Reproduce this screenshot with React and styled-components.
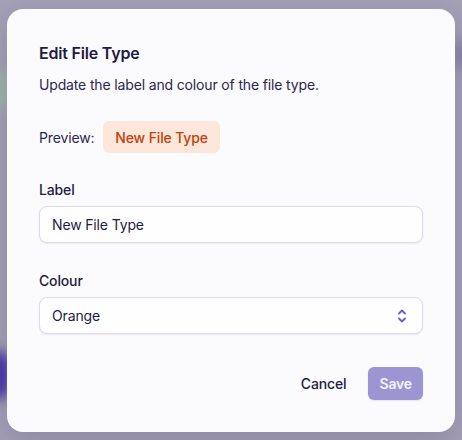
import React from "react";
import styled, { createGlobalStyle } from "styled-components";

const Global = createGlobalStyle`
  html, body { margin: 0; padding: 0; }
  body {
    font-family: Inter, "Noto Sans", sans-serif;
    background: #a4a0b7;
    -webkit-font-smoothing: antialiased;
  }
  * { box-sizing: border-box; }
`;

const Backdrop = styled.div`
  position: relative;
  width: 462px;
  height: 440px;
  overflow: hidden;
  background: #a4a0b6;
  display: flex;
  align-items: flex-start;
  justify-content: center;
  padding-top: 9px;
`;

const Blob = styled.div`
  position: absolute;
  border-radius: 50%;
  filter: blur(6px);
`;

const Dialog = styled.div`
  position: relative;
  width: 448px;
  height: 423px;
  background: #fbfafd;
  border-radius: 16px;
  box-shadow: 0 10px 30px rgba(40, 30, 80, 0.18);
  padding: 32px;
  display: flex;
  flex-direction: column;
  color: #1e1a40;
  letter-spacing: -0.15px;
`;

const Title = styled.h2`
  margin: 0;
  font-size: 16px;
  line-height: 24px;
  font-weight: 600;
  color: #1f1b44;
  letter-spacing: -0.2px;
`;

const Description = styled.p`
  margin: 10px 0 0;
  font-size: 14px;
  line-height: 20px;
  color: #2b2750;
`;

const PreviewRow = styled.div`
  margin-top: 26px;
  display: flex;
  align-items: center;
  gap: 9px;
  font-size: 14px;
  color: #2b2750;
`;

const Badge = styled.span`
  display: inline-flex;
  align-items: center;
  height: 32px;
  padding: 0 12px;
  border-radius: 6px;
  background: #fde7da;
  color: #c2410c;
  font-size: 14px;
  font-weight: 500;
`;

const Field = styled.div`
  margin-top: ${(p) => p.$top}px;
  display: flex;
  flex-direction: column;
  gap: 6px;
`;

const Label = styled.label`
  font-size: 14px;
  line-height: 20px;
  font-weight: 500;
  color: #1f1b44;
`;

const Control = styled.div`
  height: 37px;
  width: 384px;
  border: 1px solid #dedbe6;
  border-radius: 8px;
  background: #fefeff;
  box-shadow: 0 1px 2px rgba(30, 20, 70, 0.07);
  display: flex;
  align-items: center;
  justify-content: space-between;
  padding: 0 14px 0 12px;
  font-size: 14px;
  color: #1f1b44;
`;

const Footer = styled.div`
  margin-top: auto;
  display: flex;
  justify-content: flex-end;
  align-items: center;
  gap: 10px;
`;

const Button = styled.button`
  font-family: inherit;
  font-size: 14px;
  letter-spacing: -0.15px;
  height: 33px;
  padding: 0 ${(p) => (p.$primary ? "11px" : "12px")};
  border: none;
  border-radius: 6px;
  background: ${(p) => (p.$primary ? "#9c95d1" : "transparent")};
  color: ${(p) => (p.$primary ? "#f4f2fb" : "#1f1b44")};
  font-weight: ${(p) => (p.$primary ? 600 : 500)};
  box-shadow: ${(p) => (p.$primary ? "0 1px 2px rgba(30,20,70,0.1)" : "none")};
`;

const Chevrons = () => (
  <svg width="12" height="16" viewBox="0 0 12 16" fill="none" stroke="#6a58d6" strokeWidth="1.8" strokeLinecap="round" strokeLinejoin="round">
    <path d="M3 5.5 L6 2.5 L9 5.5" />
    <path d="M3 10.5 L6 13.5 L9 10.5" />
  </svg>
);

export default function App() {
  return (
    <>
      <Global />
      <Backdrop>
        <Blob style={{ left: -20, top: 70, width: 40, height: 40, background: "#9fb2a8" }} />
        <Blob style={{ left: -14, top: 350, width: 26, height: 50, background: "#4a3aa8" }} />
        <Blob style={{ right: -10, top: 40, width: 20, height: 30, background: "#8a86a0" }} />
        <Dialog>
          <Title>Edit File Type</Title>
          <Description>Update the label and colour of the file type.</Description>
          <PreviewRow>
            <span>Preview:</span>
            <Badge>New File Type</Badge>
          </PreviewRow>
          <Field $top={27}>
            <Label>Label</Label>
            <Control>New File Type</Control>
          </Field>
          <Field $top={28}>
            <Label>Colour</Label>
            <Control>
              <span>Orange</span>
              <Chevrons />
            </Control>
          </Field>
          <Footer>
            <Button>Cancel</Button>
            <Button $primary>Save</Button>
          </Footer>
        </Dialog>
      </Backdrop>
    </>
  );
}
